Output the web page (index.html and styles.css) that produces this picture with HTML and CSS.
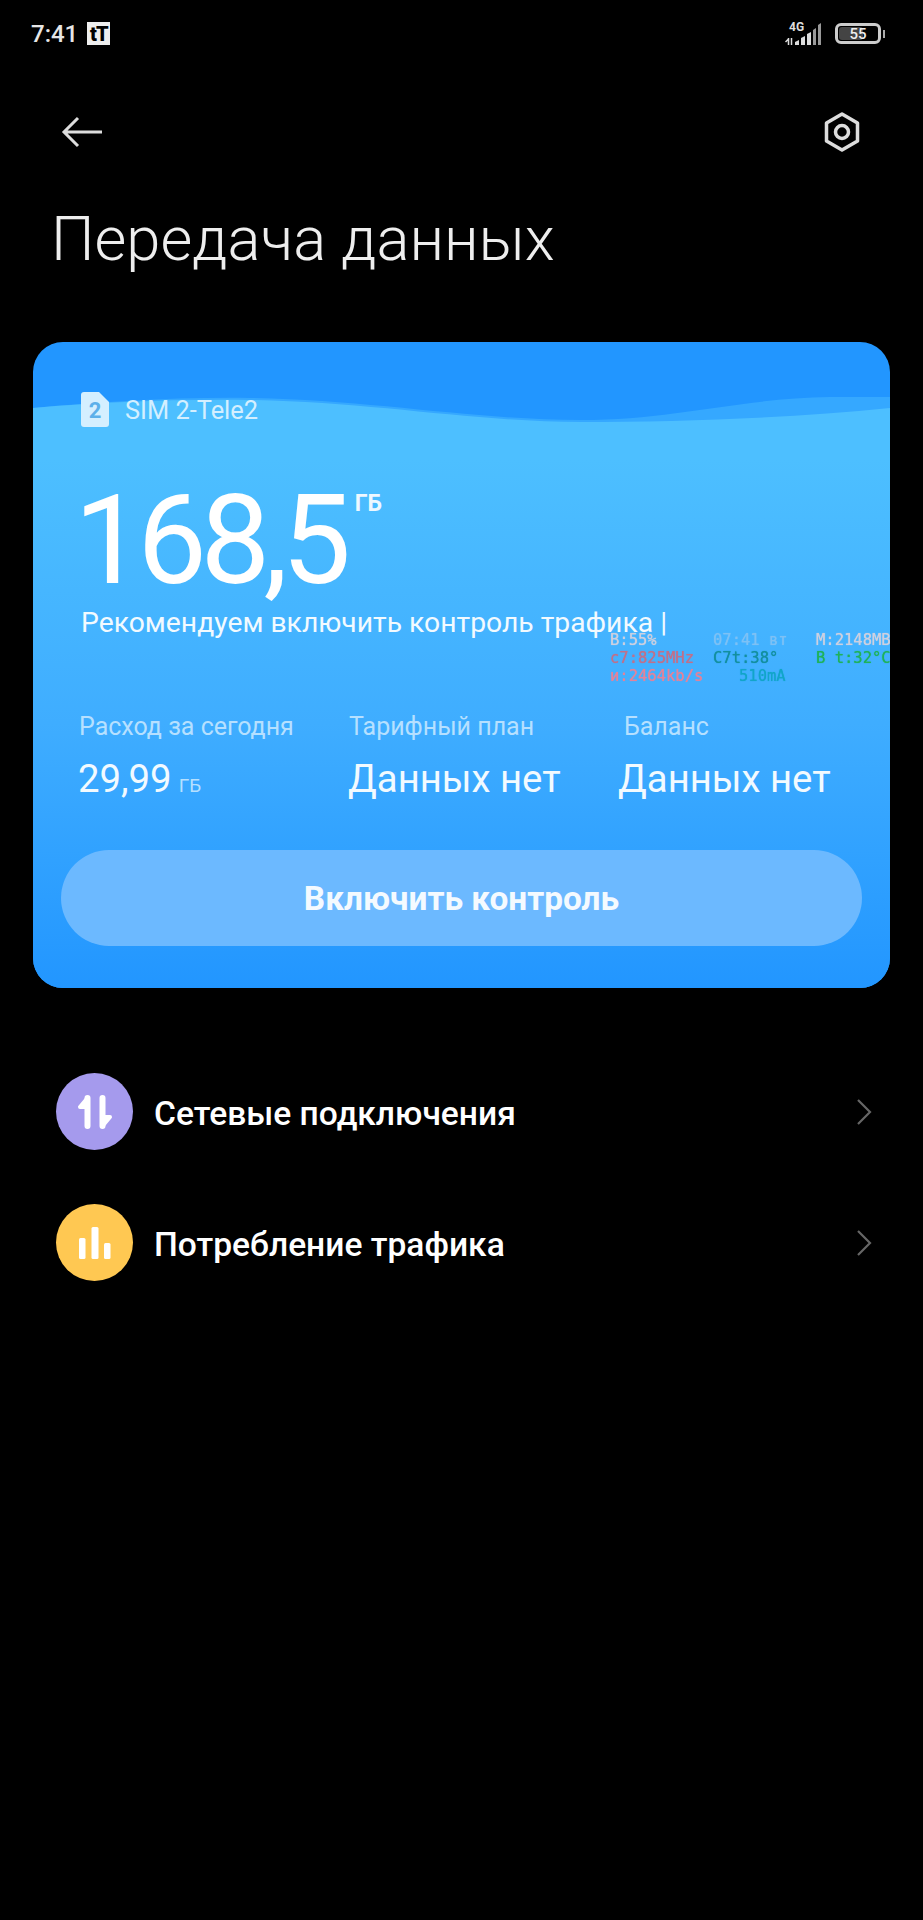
FILE: index.html
```html
<!DOCTYPE html>
<html lang="ru">
<head>
<meta charset="utf-8">
<title>Передача данных</title>
<link rel="stylesheet" href="styles.css">
</head>
<body>
<div class="status">
  <div class="status-left"><span class="time">7:41</span><span class="tt">tT</span></div>
  <div class="status-right">
    <svg class="signal" width="40" height="26" viewBox="0 0 40 26">
      <text x="4" y="10" class="net">4G</text>
      <path d="M3.500 17v7M0.500 21l3-3M6.500 17v7" stroke="#ddd" stroke-width="1.500" fill="none"/>
      <path d="M10 24v-3l4-2v5zM16 24v-7l4-2v9zM22 24v-11l4-2v13z" fill="#ddd"/>
      <path d="M28 24v-15l3-2v17zM33 24V4l3-2v22z" fill="#999"/>
    </svg>
    <div class="battery"><div class="battery-fill"></div><span class="battery-num">55</span></div>
    <div class="battery-tip"></div>
  </div>
</div>

<div class="nav">
  <svg width="42" height="32" viewBox="0 0 42 32"><path d="M41 16H3M17 2 3 16l14 14" fill="none" stroke="#ddd" stroke-width="3"/></svg>
  <svg width="36" height="40" viewBox="0 0 36 40"><path d="M18 2 33.500 11v18L18 38 2.500 29V11z" fill="none" stroke="#ddd" stroke-width="3.500" stroke-linejoin="round"/><circle cx="18" cy="20" r="6.500" fill="none" stroke="#ddd" stroke-width="3.500"/></svg>
</div>

<h1 class="title">Передача данных</h1>

<section class="card">
  <svg class="wave" viewBox="0 0 857 646" preserveAspectRatio="none"><defs><linearGradient id="wg" x1="0" y1="0" x2="0" y2="1"><stop offset="0.1" stop-color="#4dbfff"/><stop offset="0.55" stop-color="#3fadff"/><stop offset="1" stop-color="#2296ff"/></linearGradient></defs><path d="M0 66C70 60 140 55 217 56 340 58 440 78 548 78 640 78 710 56 797 55 820 55 840 55 857 55V200H0z" fill="#35a8ff"/><path d="M0 66C70 60 140 57 217 58 340 60 440 80 548 80 650 80 760 76 857 66V646H0z" fill="url(#wg)"/></svg>
  <div class="card-body">
    <div class="sim">
      <svg width="28" height="35" viewBox="0 0 28 35"><path d="M3 0h15l10 10v22a3 3 0 0 1-3 3H3a3 3 0 0 1-3-3V3a3 3 0 0 1 3-3z" fill="#d4efff"/><text x="14" y="26" class="sim-n">2</text></svg>
      <span>SIM 2-Tele2</span>
    </div>
    <div class="usage"><span class="big">168,5</span><span class="unit">ГБ</span></div>
    <div class="hint">Рекомендуем включить контроль трафика |</div>
    <div class="stats">
      <div class="stat s1"><div class="label">Расход за сегодня</div><div class="value">29,99<small>ГБ</small></div></div>
      <div class="stat s2"><div class="label">Тарифный план</div><div class="value">Данных нет</div></div>
      <div class="stat s3"><div class="label">Баланс</div><div class="value">Данных нет</div></div>
    </div>
    <div class="btn">Включить контроль</div>
  </div>
  <div class="overlay">
    <span class="o1 grey">B:55%</span><span class="o2 ltblue">07:41 вт</span><span class="o3 grey">M:2148MB</span>
    <span class="o1 red">c7:825MHz</span><span class="o2 teal">C7t:38°</span><span class="o3 green">B t:32°C</span>
    <span class="o1 pink">и:2464kb/s</span><span class="o2 cyan">510mA</span><span class="o3"></span>
  </div>
</section>

<div class="list">
  <div class="row">
    <span class="circle purple"><svg width="36" height="34" viewBox="0 0 36 34"><path d="M3 12 10.500 3V12zM33 22 25.500 31V22z" fill="#fff" stroke="#fff" stroke-width="4" stroke-linejoin="round"/><path d="M10.500 3V31M25.500 3V31" fill="none" stroke="#fff" stroke-width="6" stroke-linecap="round"/></svg></span>
    <span class="row-text">Сетевые подключения</span>
    <svg class="chev" width="16" height="28" viewBox="0 0 16 28"><path d="M2 2l12 12L2 26" fill="none" stroke="#666" stroke-width="2.200"/></svg>
  </div>
  <div class="row">
    <span class="circle yellow"><svg width="32" height="32" viewBox="0 0 32 32"><rect x="0" y="11" width="6.500" height="21" rx="1.500" fill="#fff"/><rect x="12.500" y="0" width="7" height="32" rx="1.500" fill="#fff"/><rect x="25" y="16" width="6.500" height="16" rx="1.500" fill="#fff"/></svg></span>
    <span class="row-text">Потребление трафика</span>
    <svg class="chev" width="16" height="28" viewBox="0 0 16 28"><path d="M2 2l12 12L2 26" fill="none" stroke="#666" stroke-width="2.200"/></svg>
  </div>
</div>
</body>
</html>
```
FILE: styles.css
```css
* { box-sizing: border-box; }
html, body { margin: 0; padding: 0; }
body { width: 923px; height: 1920px; background: #000; color: #fff; font-family: Roboto, "Noto Sans", sans-serif; overflow: hidden; }

.status { display: flex; justify-content: space-between; align-items: center; height: 67px; padding: 0 38px 0 31px; }
.status-left { display: flex; align-items: center; gap: 9px; }
.time { font-size: 24px; font-weight: 500; color: #e6e6e6; }
.tt { display: inline-flex; align-items: center; justify-content: center; width: 23px; height: 23px; background: #eee; color: #000; font-size: 20px; font-weight: 900; letter-spacing: -1px; }
.status-right { display: flex; align-items: center; }
.signal { margin-right: 10px; }
.net { font: 700 12px Roboto, sans-serif; fill: #ddd; }
.battery { position: relative; width: 46px; height: 21px; border: 3px solid #ccc; border-radius: 6px; display: flex; align-items: center; justify-content: center; }
.battery-fill { position: absolute; left: 1px; top: 1px; bottom: 1px; width: 24px; background: #444; border-radius: 3px; }
.battery-num { position: relative; font-size: 15px; font-weight: 500; color: #eee; }
.battery-tip { width: 2px; height: 8px; background: #aaa; margin-left: 2px; }

.nav { display: flex; justify-content: space-between; align-items: center; height: 42px; margin-top: 44px; padding: 0 63px 0 61px; }

.title { margin: 51px 0 0 51px; font-size: 61.500px; font-weight: 300; line-height: 70px; color: #eee; }

.card { position: relative; width: 857px; height: 646px; margin: 68px 0 0 33px; border-radius: 30px; background: #2296ff; overflow: hidden; }
.wave { position: absolute; left: 0; top: 0; width: 100%; height: 100%; }
.card-body { position: relative; display: flex; flex-direction: column; height: 100%; padding: 50px 28px 0; }
.sim { display: flex; align-items: center; gap: 16px; margin-left: 20px; font-size: 25.400px; color: #d4efff; height: 35px; }
.sim-n { font: 700 22px Roboto, sans-serif; fill: #5cb0ea; text-anchor: middle; }
.usage { display: flex; align-items: flex-start; margin: 57px 0 0 13px; height: 114px; }
.big { font-size: 124px; line-height: 114px; font-weight: 400; letter-spacing: -6.500px; }
.unit { font-size: 23px; font-weight: 700; margin: 6px 0 0 10px; color: #eef8ff; }
.hint { margin: 8px 0 0 20px; font-size: 28.300px; line-height: 34px; color: #f2faff; }
.stats { display: flex; margin: 72px 0 0 0; }
.stat { flex: none; }
.s1 { width: 287px; padding-left: 17px; }
.s2 { width: 270px; }
.s3 { width: 243px; }
.label { font-size: 25px; line-height: 30px; color: #b6e0ff; }
.s1 .label { padding-left: 1px; }
.s2 .label { padding-left: 1px; }
.s3 .label { padding-left: 6px; }
.value { margin-top: 14px; font-size: 38.300px; line-height: 46px; font-weight: 400; color: #f2faff; }
.value small { margin-left: 7px; font-size: 19px; font-weight: 400; color: #b6e0ff; }
.btn { display: flex; align-items: center; justify-content: center; height: 96px; margin-top: 41px; border-radius: 48px; background: #6cb9ff; font-size: 33.400px; font-weight: 700; color: #f4faff; }

.overlay { position: absolute; left: 577px; top: 289px; width: 280px; display: grid; grid-template-columns: 103px 103px 74px; font: 15.500px/18px "DejaVu Sans Mono", monospace; white-space: pre; filter: blur(0.4px); text-shadow: 0 0 1px currentColor; }
.grey { color: #cdd0e0; }
.ltblue { color: #7dc1f5; }
.red { color: #c0708a; }
.teal { color: #138f9f; }
.green { color: #1fb25a; }
.pink { color: #e58299; }
.cyan { color: #12a5c9; padding-left: 26px; }

.list { display: flex; flex-direction: column; gap: 54px; margin: 85px 0 0 56px; padding-right: 51px; }
.row { display: flex; align-items: center; height: 77px; }
.circle { flex: none; display: flex; align-items: center; justify-content: center; width: 77px; height: 77px; border-radius: 50%; }
.purple { background: #a59aed; }
.yellow { background: #ffc852; }
.row-text { flex: 1; margin-left: 21px; padding-top: 3px; font-size: 33.600px; font-weight: 500; color: #fff; }
.chev { flex: none; }
```
